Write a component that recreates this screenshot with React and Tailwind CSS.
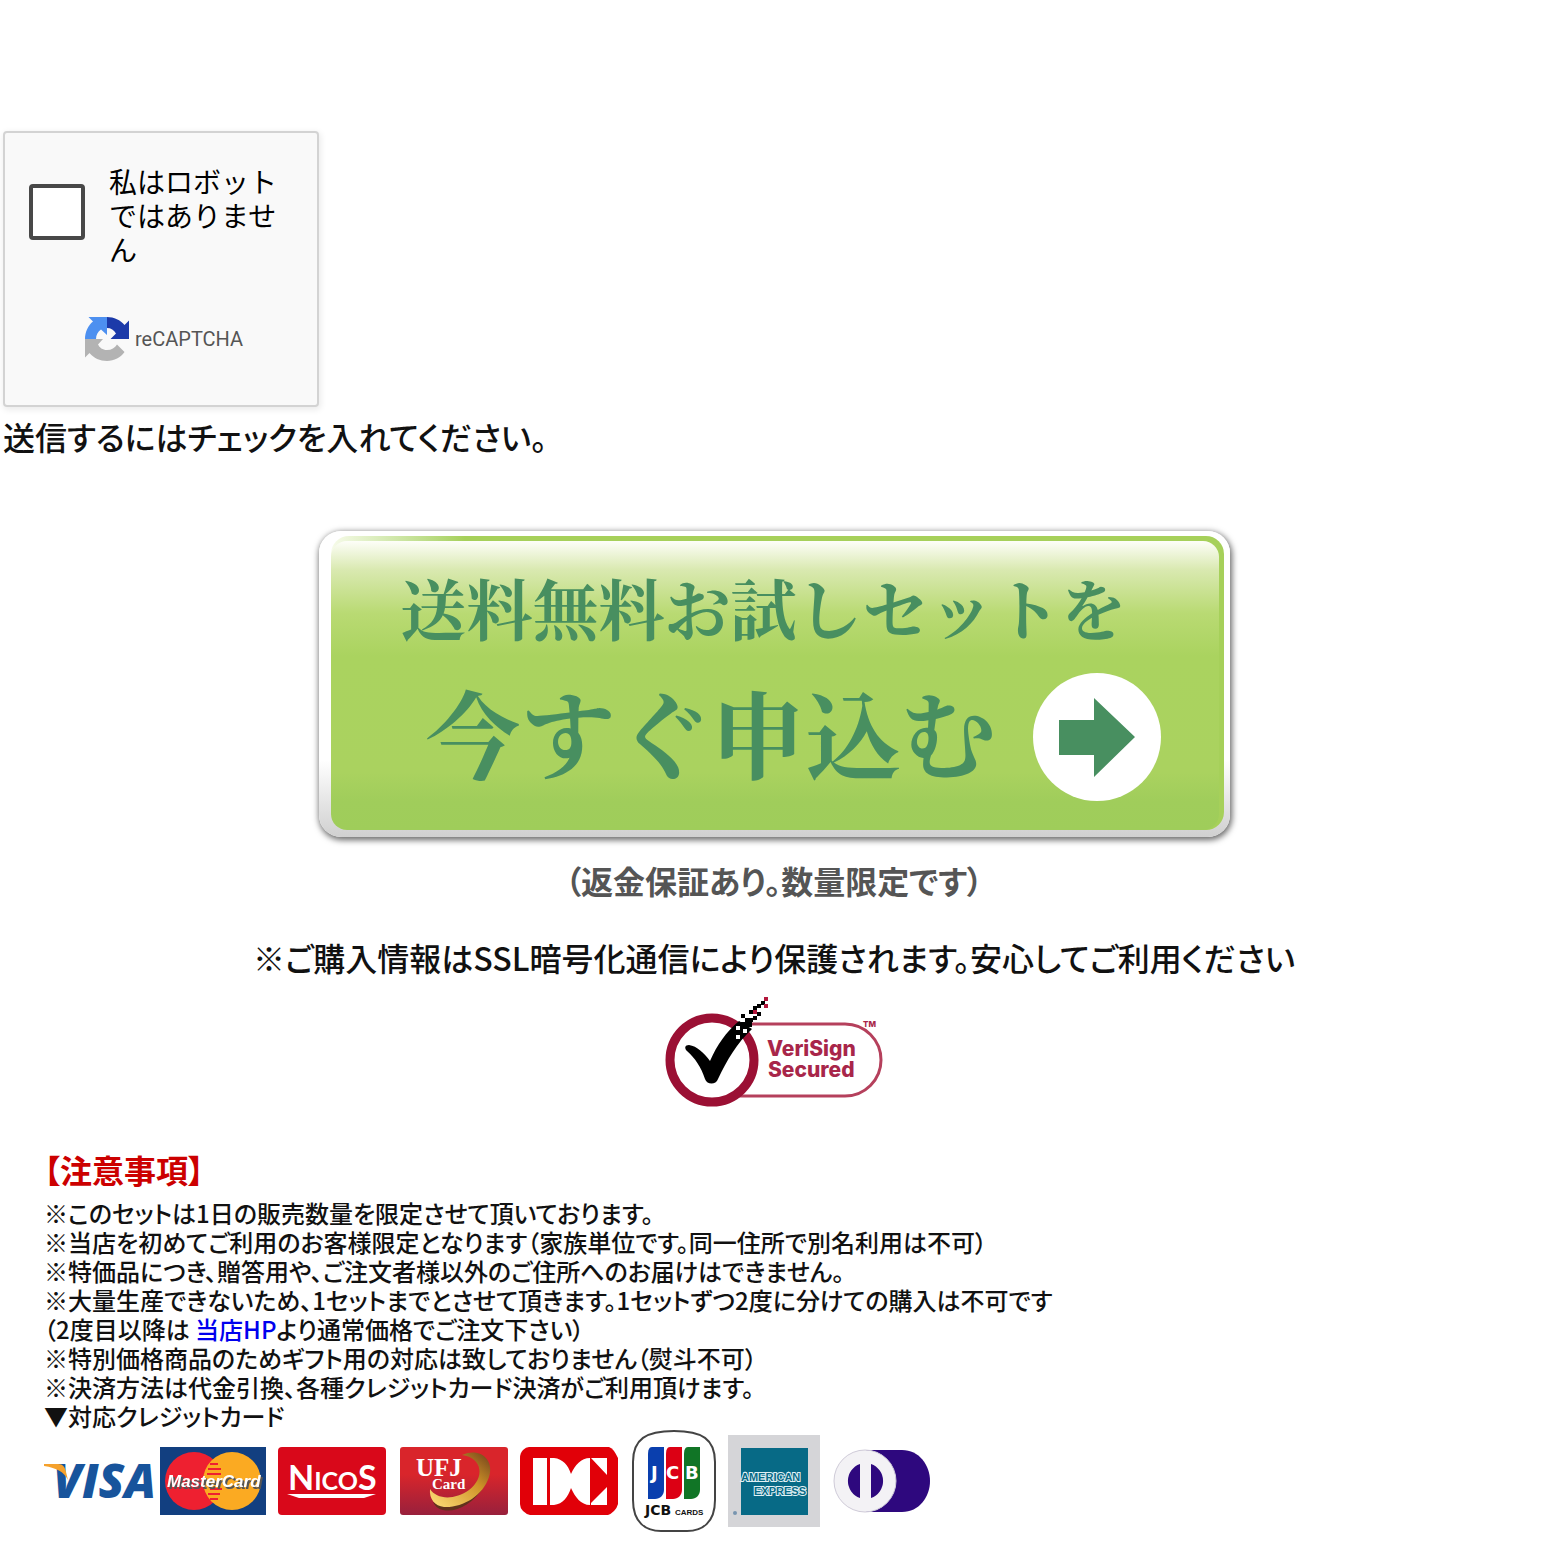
const NOTES = [
    '※このセットは1日の販売数量を限定させて頂いております。',
    '※当店を初めてご利用のお客様限定となります（家族単位です。同一住所で別名利用は不可）',
    '※特価品につき、贈答用や、ご注文者様以外のご住所へのお届けはできません。',
    '※大量生産できないため、1セットまでとさせて頂きます。1セットずつ2度に分けての購入は不可です',
    <>（2度目以降は <a href="#shop" className="text-[#0000ee]">当店HP</a>より通常価格でご注文下さい）</>,
    '※特別価格商品のためギフト用の対応は致しておりません（熨斗不可）',
    '※決済方法は代金引換、各種クレジットカード決済がご利用頂けます。',
    '▼対応クレジットカード',
];

function RecaptchaLogo() {
    return (
        <svg viewBox="0 0 46 46" className="size-[46px]" aria-hidden>
            <path fill="#1c3aa9" d="M23 1c7 0 13.500 3 17.500 8L45 4.500V23H26.500l5.500-5.500C30 14 27 12 23 12z" />
            <path fill="#4d90f0" d="M23 1H4.500L9 5.500C4 9.500 1 16 1 23h11c0-4 2-7.500 5-9.500l6 5.500z" />
            <path fill="#b3b3b3" d="M1 23v18.500L5.500 37c4 5 10.500 8 17.500 8 7.300 0 13.700-3.500 17.500-9l-7.500-7.500C31 32 27.500 34 23 34c-4.500 0-7.500-2.500-9-5.500l5-5.500z" />
        </svg>
    );
}

function Recaptcha() {
    return (
        <div className="flex h-[276px] w-[316px] flex-col rounded-[4px] border-2 border-[#d3d3d3] bg-[#f9f9f9] pt-[31px] shadow-[1px_2px_6px_1px_rgba(0,0,0,0.08)]">
            <div className="flex gap-6 pl-6">
                <input
                    id="not-robot"
                    type="checkbox"
                    className="mt-5 size-14 shrink-0 appearance-none rounded-[4px] border-4 border-[#484848] bg-white"
                />
                <label htmlFor="not-robot" className="w-[170px] text-[28px] leading-[34px] text-black">
                    私はロボットではありません
                </label>
            </div>
            <div className="mt-[50px] flex items-center gap-[5px] pl-[79px]">
                <RecaptchaLogo />
                <span className="font-[Roboto,sans-serif] text-[20px] leading-6 text-[#555]">reCAPTCHA</span>
            </div>
        </div>
    );
}

function ApplyButton() {
    return (
        <button
            type="button"
            className="w-full max-w-[911px] cursor-pointer rounded-[22px] bg-linear-to-b from-white from-75% to-[#d0d0d0] pt-[5px] pr-[6px] pb-[7px] pl-[12px] shadow-[1px_2px_6px_1px_rgba(0,0,0,0.6)]"
        >
            <span className="block rounded-[18px] bg-linear-to-r from-[#f7fbea] to-[#a6d05a] to-15% pt-[5px] pr-[5px]">
                <span className="block rounded-[16px] bg-[linear-gradient(#fdfef8_0%,#d9e9b0_10%,#b9da73_25%,#aad35f_40%,#aad25f_80%,#a0cd5b_90%,#9fcd5a_100%)] pb-[23px] font-['Noto_Serif_CJK_JP','Noto_Sans_CJK_JP',serif] font-bold text-[#488f60]">
                    <span className="block pt-[21px] pl-[70px] text-left text-[66px] leading-[90px] whitespace-nowrap">
                        送料無料お試しセットを
                    </span>
                    <span className="mt-[15px] flex items-center gap-[37px] pl-[95px]">
                        <span className="pb-3 text-[95px] leading-[128px] whitespace-nowrap">今すぐ申込む</span>
                        <svg viewBox="0 0 128 128" className="size-32 shrink-0" aria-hidden>
                            <circle cx="64" cy="64" r="64" fill="#fff" />
                            <path fill="#488f60" d="M26 47h35V25l41 39-41 40V82H26z" />
                        </svg>
                    </span>
                </span>
            </span>
        </button>
    );
}

function VeriSign() {
    return (
        <svg viewBox="664 994 222 114" className="h-[114px] w-[222px]" role="img" aria-label="VeriSign Secured">
            <path fill="none" stroke="#b5405c" strokeWidth="3" d="M740 1024h106a36 36 0 0 1 0 72H738" />
            <circle cx="713" cy="1060" r="42" fill="#fff" stroke="#9b1034" strokeWidth="9" />
            <path d="M690 1045c8 1 15 8 21 16 7-16 16-29 29-40l13 8c-15 14-25 31-34 50-2 6-11 6-13 0-4-12-10-21-18-28-3-3-2-6 2-6z" />
            <path d="M742 1014h4v4h-4zM746 1018h4v4h-4zM750 1010h4v4h-4zM750 1018h4v4h-4zM754 1006h4v4h-4zM758 1012h4v4h-4zM754 1016h4v4h-4zM758 1004h4v4h-4zM762 1001h4v4h-4zM742 1022h11v5h-11z" />
            <path fill="#fff" d="M737 1026h4v4h-4zM744 1029h4v4h-4zM737 1035h4v4h-4z" />
            <path fill="#b3173c" d="M765 997h4v4h-4zM765 1004h4v4h-4zM754 1010h4v4h-4z" />
            <g fill="#a8264a" fontFamily="Inter, sans-serif" fontWeight="800">
                <text x="768" y="1056" fontSize="21">VeriSign</text>
                <text x="769" y="1077" fontSize="21">Secured</text>
                <text x="864" y="1027" fontSize="8">TM</text>
            </g>
        </svg>
    );
}

function CardLogos() {
    return (
        <div className="flex flex-wrap items-center gap-3">
            <svg viewBox="0 0 104 68" className="h-[68px] w-[104px] overflow-visible" role="img" aria-label="VISA">
                <text x="9" y="51" fontFamily="Open Sans, sans-serif" fontSize="47" fontWeight="800" fontStyle="italic" fill="#17549c">VISA</text>
                <path fill="#f5a12c" d="M0 17h14c5 0 7 3 8 8l2 8c-4-8-11-12-24-14z" />
            </svg>
            <svg viewBox="0 0 106 68" className="h-[68px] w-[106px]" role="img" aria-label="MasterCard">
                <path fill="#123f80" d="M0 0h106v68H0z" />
                <circle cx="34" cy="34" r="29" fill="#ee2030" />
                <circle cx="72" cy="34" r="29" fill="#fbaa22" />
                <path stroke="#ee2030" strokeWidth="2" d="M50 17h8M48 22h13M47 27h14M50 42h12M48 47h12M50 52h8" />
                <text
                    x="7"
                    y="40"
                    fill="#fff"
                    fontFamily="Liberation Sans, sans-serif"
                    fontSize="17"
                    fontWeight="700"
                    fontStyle="italic"
                    className="drop-shadow-[2px_2px_0_#555]"
                >
                    MasterCard
                </text>
            </svg>
            <svg viewBox="0 0 110 68" className="h-[68px] w-[110px]" role="img" aria-label="NICOS">
                <rect width="108" height="68" rx="4" fill="#d9081a" />
                <text x="10" y="43" fill="#fff" fontFamily="Lato, sans-serif" fontSize="34" fontWeight="700">
                    N<tspan fontSize="25">ICO</tspan>S
                </text>
                <path fill="#fff" d="M9 47h89l-12 4H21z" />
            </svg>
            <svg viewBox="0 0 108 68" className="h-[68px] w-[108px]" role="img" aria-label="UFJ Card">
                <defs>
                    <linearGradient id="ufj-red" x1="0" y1="0" x2="0" y2="1">
                        <stop offset="0.400" stopColor="#d9252b" />
                        <stop offset="1" stopColor="#98203c" />
                    </linearGradient>
                    <linearGradient id="ufj-gold" x1="0" y1="1" x2="1" y2="0">
                        <stop offset="0" stopColor="#ffe07a" />
                        <stop offset="0.600" stopColor="#cf9328" />
                        <stop offset="1" stopColor="#70401b" />
                    </linearGradient>
                </defs>
                <rect width="108" height="68" rx="3" fill="url(#ufj-red)" />
                <path fill="#60321c" d="M33 55c12 8 27 5 42-10l10-7C73 58 55 66 43 63c-5-1-8-4-10-8z" />
                <path fill="url(#ufj-gold)" d="M62 8c17-8 33 4 27 22C83 49 62 61 44 60c-9-1-15-8-14-18 7 11 25 11 39 1C85 31 83 11 62 8z" />
                <g fill="#fff" fontFamily="Liberation Serif, serif" fontWeight="700">
                    <text x="16" y="29" fontSize="25">UFJ</text>
                    <text x="32" y="42" fontSize="15">Card</text>
                </g>
            </svg>
            <svg viewBox="0 0 100 68" className="h-[68px] w-[100px]" role="img" aria-label="DC">
                <path fill="#e10008" d="M9 0h80q3 1 5 4t4 7v46q-1 4-4 7t-6 4H10q-4-1-7-4t-3-7V11q0-5 3-8t6-3z" />
                <path fill="#fff" d="M13 11h14v47H13zM30 11h4c9 1 14 7 17 16 4-9 10-16 19-16v47c-9 0-15-8-19-17-3 9-8 16-17 17h-4zM71 11h16v17zM71 56l16-16v18H71z" />
            </svg>
            <svg viewBox="0 0 84 102" className="h-[102px] w-[84px]" role="img" aria-label="JCB CARDS">
                <path fill="#fff" stroke="#444" strokeWidth="2" d="M42 1c28 0 41 8 41 31v38c0 23-13 31-28 31H29C14 101 1 93 1 70V32C1 9 14 1 42 1z" />
                <path fill="#0a3fae" d="M20 17h12v43c0 5-4 9-9 9h-7V25c0-5 1-8 4-8z" />
                <path fill="#dc0014" d="M38 17h12v43c0 5-4 9-9 9h-7V25c0-5 1-8 4-8z" />
                <path fill="#117526" d="M56 17h12v43c0 5-4 9-9 9h-7V25c0-5 1-8 4-8z" />
                <g fontFamily="DejaVu Sans, sans-serif" fontWeight="700">
                    <text y="49" fontSize="18" fill="#fff">
                        <tspan x="19">J</tspan>
                        <tspan x="34">C</tspan>
                        <tspan x="53">B</tspan>
                    </text>
                    <text x="13" y="85" fontSize="14" fill="#111">JCB</text>
                    <text x="43" y="85" fontFamily="Liberation Sans, sans-serif" fontSize="8" fill="#111">CARDS</text>
                </g>
            </svg>
            <svg viewBox="0 0 93 92" className="h-[92px] w-[93px]" role="img" aria-label="AMERICAN EXPRESS">
                <path fill="#d5d5d8" d="M0 0h92v92H0z" />
                <path fill="#076a86" d="M13 13h67v67H13z" />
                <g fill="#076a86" stroke="#dff0f4" strokeWidth="2" paintOrder="stroke" fontFamily="Liberation Sans, sans-serif" fontSize="11" fontWeight="700">
                    <text x="13" y="46">AMERICAN</text>
                    <text x="26" y="60">EXPRESS</text>
                </g>
                <circle cx="7" cy="78" r="2" fill="#7895b0" />
            </svg>
            <svg viewBox="0 0 98 66" className="h-[66px] w-[98px]" role="img" aria-label="Diners Club">
                <path fill="#2e087e" d="M33 2h36c17 0 28 15 28 31S86 64 69 64H33z" />
                <circle cx="32" cy="33" r="31" fill="#f3f2f5" stroke="#cfcbd8" />
                <path fill="#2e087e" d="M27 16v34a18 18 0 0 1 0-34zM38 16v34a18 18 0 0 0 0-34z" />
            </svg>
        </div>
    );
}

export default function App() {
    return (
        <main className="bg-white pt-[131px] pb-3 font-['Noto_Sans_CJK_JP',sans-serif] font-medium text-[#111]">
            <section className="pl-[3px]">
                <div className="font-normal">
                    <Recaptcha />
                </div>
                <p className="mt-[6px] text-[32px] leading-[46px] [font-feature-settings:'palt']">送信するにはチェックを入れてください。</p>
            </section>

            <section className="mt-[72px] flex flex-col items-center pr-4 pl-5 text-center text-[32px] leading-[46px] [font-feature-settings:'palt']">
                <div className="flex w-full justify-center [font-feature-settings:normal]">
                    <ApplyButton />
                </div>
                <p className="mt-[20px] font-bold text-[#555]">（返金保証あり。数量限定です）</p>
                <p className="mt-[31px]">※ご購入情報はSSL暗号化通信により保護されます。安心してご利用ください</p>
                <div className="mt-[14px]">
                    <VeriSign />
                </div>
            </section>

            <section className="mt-[38px] px-11 [font-feature-settings:'palt']">
                <h2 className="text-[32px] leading-[46px] font-bold text-[#cc0000]">【注意事項】</h2>
                <ul className="mt-[6px] text-[24px] leading-[29px]">
                    {NOTES.map((note, i) => (
                        <li key={i}>{note}</li>
                    ))}
                </ul>
                <CardLogos />
            </section>
        </main>
    );
}
